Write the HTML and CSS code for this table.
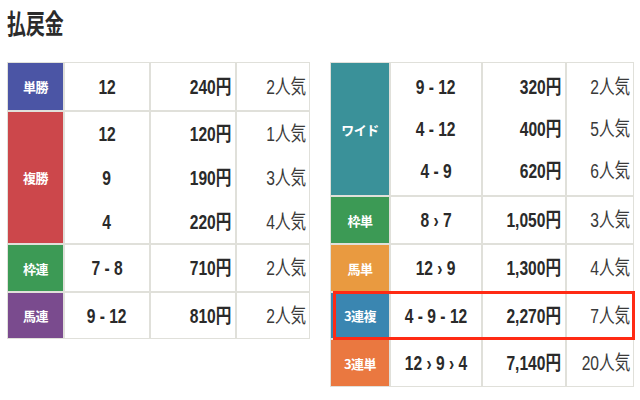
FILE: index.html
```html
<!DOCTYPE html>
<html lang="ja">
<head>
<meta charset="utf-8">
<link rel="stylesheet" href="styles.css">
</head>
<body>
<div class="page">
  <h2 class="title"><span class="sq">払戻金</span></h2>
  <div class="board">
    <div class="tbl tbl-left">
      <div class="lab lab-blue">単勝</div>
      <div class="c c2"><span class="t">12</span></div>
      <div class="c c3"><span class="t">240円</span></div>
      <div class="c c4"><span class="t">2人気</span></div>

      <div class="lab lab-red">複勝</div>
      <div class="c c2 multi"><span class="t">12</span><span class="t">9</span><span class="t">4</span></div>
      <div class="c c3 multi"><span class="t">120円</span><span class="t">190円</span><span class="t">220円</span></div>
      <div class="c c4 multi"><span class="t">1人気</span><span class="t">3人気</span><span class="t">4人気</span></div>

      <div class="lab lab-green">枠連</div>
      <div class="c c2"><span class="t">7 - 8</span></div>
      <div class="c c3"><span class="t">710円</span></div>
      <div class="c c4"><span class="t">2人気</span></div>

      <div class="lab lab-purple">馬連</div>
      <div class="c c2"><span class="t">9 - 12</span></div>
      <div class="c c3"><span class="t">810円</span></div>
      <div class="c c4"><span class="t">2人気</span></div>
    </div>

    <div class="tbl tbl-right">
      <div class="lab lab-teal">ワイド</div>
      <div class="c c2 multi"><span class="t">9 - 12</span><span class="t">4 - 12</span><span class="t">4 - 9</span></div>
      <div class="c c3 multi"><span class="t">320円</span><span class="t">400円</span><span class="t">620円</span></div>
      <div class="c c4 multi"><span class="t">2人気</span><span class="t">5人気</span><span class="t">6人気</span></div>

      <div class="lab lab-green">枠単</div>
      <div class="c c2"><span class="t">8 › 7</span></div>
      <div class="c c3"><span class="t">1,050円</span></div>
      <div class="c c4"><span class="t">3人気</span></div>

      <div class="lab lab-orange">馬単</div>
      <div class="c c2"><span class="t">12 › 9</span></div>
      <div class="c c3"><span class="t">1,300円</span></div>
      <div class="c c4"><span class="t">4人気</span></div>

      <div class="lab lab-steel">3連複</div>
      <div class="c c2"><span class="t">4 - 9 - 12</span></div>
      <div class="c c3"><span class="t">2,270円</span></div>
      <div class="c c4"><span class="t">7人気</span></div>

      <div class="lab lab-coral">3連単</div>
      <div class="c c2"><span class="t">12 › 9 › 4</span></div>
      <div class="c c3"><span class="t">7,140円</span></div>
      <div class="c c4"><span class="t">20人気</span></div>

      <div class="highlight"></div>
    </div>
  </div>
</div>
</body>
</html>
```

FILE: styles.css
```css
* { box-sizing: border-box; }
html, body { margin: 0; padding: 0; background: #fff; }
body {
  font-family: "Noto Sans CJK JP", "Liberation Sans", sans-serif;
  color: #333;
}
.page { padding: 6px 0 0 7px; width: 640px; }
.title {
  margin: 0;
  height: 56px;
  font-size: 27px;
  font-weight: 700;
  line-height: 34px;
  color: #2b2b2b;
}
.sq { display: inline-block; transform: scaleX(0.7); transform-origin: left center; }
.board { display: flex; gap: 20px; align-items: flex-start; }
.tbl {
  display: grid;
  gap: 2px;
  padding: 1px;
  background: #e0e0da;
}
.tbl-left {
  grid-template-columns: 55px 84px 84px 72px;
  grid-template-rows: 47px 131px 46px 45px;
}
.tbl-right {
  position: relative;
  grid-template-columns: 58px 90px 82px 66px;
  grid-template-rows: 132px 46px 46px 45px 46px;
}
.lab {
  display: flex;
  align-items: center;
  justify-content: center;
  color: #fff;
  font-size: 13px;
  font-weight: 700;
  letter-spacing: -0.5px;
}
.lab-blue { background: #4b55a5; }
.lab-red { background: #cc474b; }
.lab-green { background: #3c9a55; }
.lab-purple { background: #7a4b8e; }
.lab-teal { background: #3a9199; }
.lab-orange { background: #e99a40; }
.lab-steel { background: #3a86b1; }
.lab-coral { background: #ea7840; }
.c {
  background: #fff;
  display: flex;
  flex-direction: column;
  justify-content: center;
  font-family: "Liberation Sans", "Noto Sans CJK JP", sans-serif;
  font-size: 20px;
  font-weight: 700;
  line-height: 44px;
  color: #2a2a2a;
}
.tbl-right .c { line-height: 42px; }
.c2 { align-items: center; }
.c3 { align-items: flex-end; padding-right: 4px; }
.c4 { align-items: flex-end; padding-right: 3px; font-weight: 400; color: #3a3a3a; }
.t { display: inline-block; transform: scaleX(0.78); white-space: pre; }
.c3 .t, .c4 .t { transform-origin: right center; }
.highlight {
  position: absolute;
  left: 3px;
  top: 229px;
  width: 302px;
  height: 49px;
  border: 3px solid #ff2a14;
}
```
